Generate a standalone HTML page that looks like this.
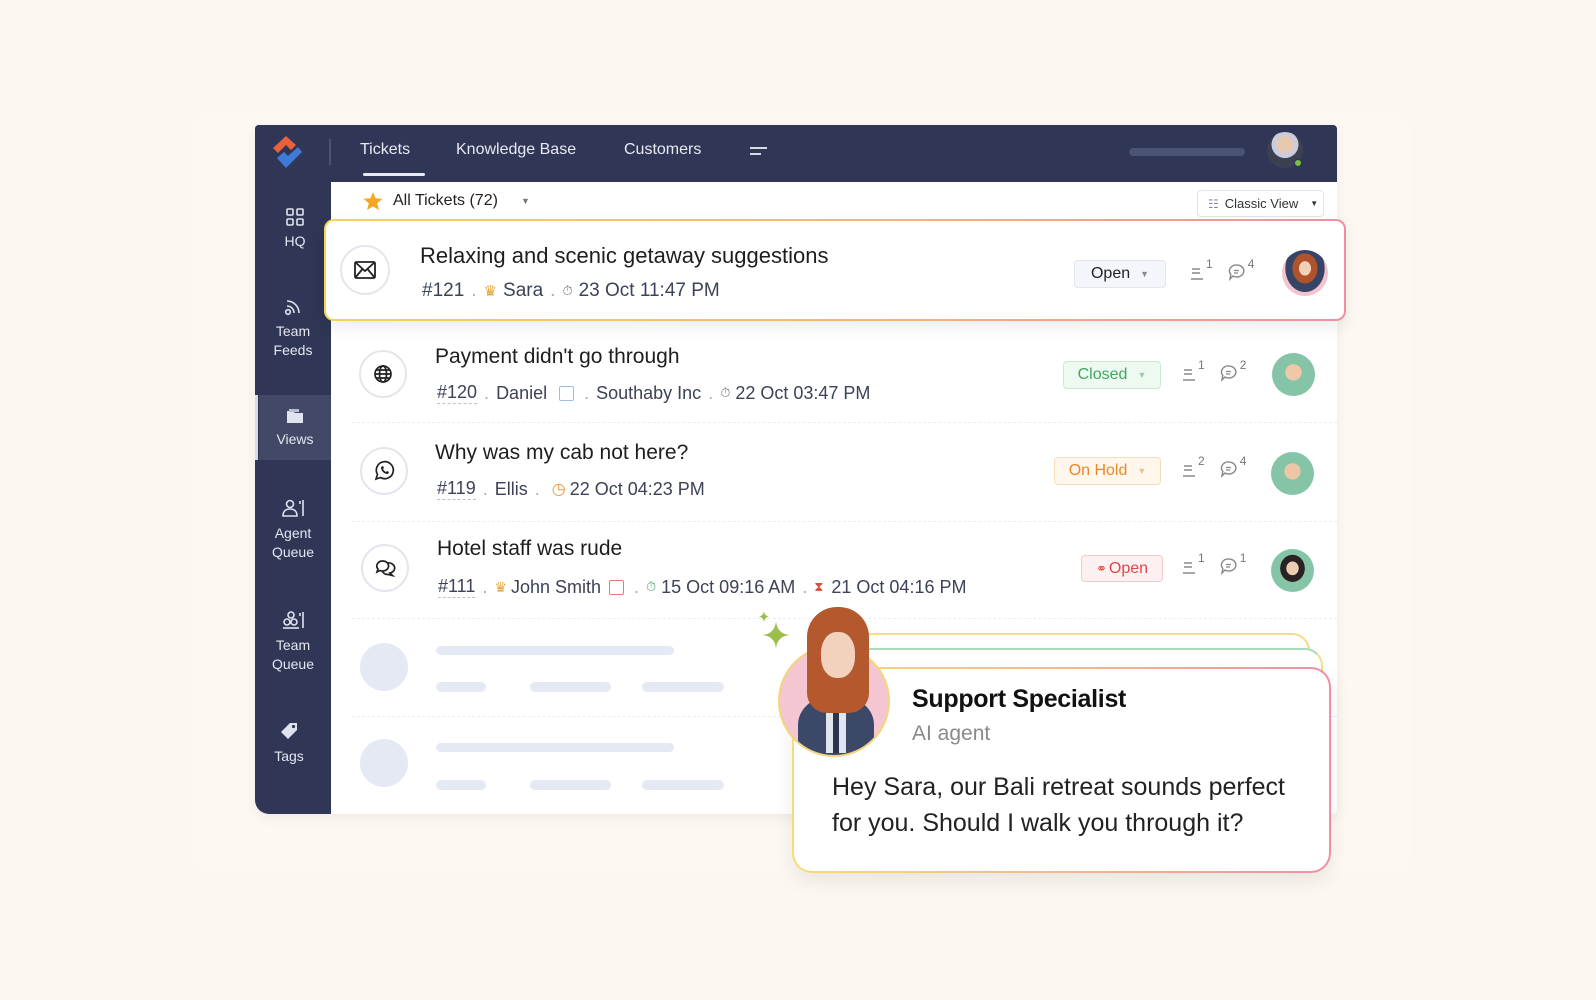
<!DOCTYPE html>
<html><head><meta charset="utf-8">
<style>
*{box-sizing:border-box;margin:0;padding:0}
body{width:1596px;height:1000px;background:#fcf8f1;font-family:"Liberation Sans",sans-serif;position:relative;overflow:hidden;color:#222}
.abs{position:absolute}
.panel{left:190px;top:112px;width:1222px;height:762px;background:#fdf9f2;border-radius:20px}
.frame{left:255px;top:125px;width:1082px;height:689px;background:#fff;border-radius:4px 4px 4px 14px;overflow:hidden;box-shadow:0 4px 14px rgba(0,0,0,.06)}
.nav{left:0;top:0;width:1082px;height:57px;background:#2f3656}
.side{left:0;top:0;width:76px;height:689px;background:#2f3656}
.tab{color:#e8eaf2;font-size:16px;top:16px}
.sitem{position:absolute;left:0;width:76px;text-align:center;color:#e4e7f0;font-size:14px;line-height:19px}
.sitem svg{display:block;margin:0 auto 6px}
.row .t{position:absolute;font-size:21px;color:#1e1e1e}
.meta{position:absolute;font-size:18px;color:#3c4257;display:flex;align-items:center;white-space:nowrap}
.meta .d{color:#aab;margin:0 7px}
.ic{position:absolute;width:48px;height:48px;border-radius:50%;border:2px solid #e4e6ee;background:#fff;display:flex;align-items:center;justify-content:center}
.st{position:absolute;height:28px;border-radius:4px;font-size:16px;display:flex;align-items:center;justify-content:center;gap:10px}
.st i{font-style:normal;font-size:9px;opacity:.5}
.cnt{position:absolute;font-size:13px;color:#777;display:flex;align-items:flex-start;gap:14px}
.cnt span{display:flex;align-items:flex-start}
.cnt sup{font-size:12px;line-height:1;margin-left:1px;margin-top:-4px}
.av{position:absolute;border-radius:50%;overflow:hidden}
.sep{position:absolute;left:352px;width:985px;border-top:1px dashed #eceef3}
.sk{position:absolute;background:#e4e9f3;border-radius:6px}
.hid{border-bottom:1px dashed #b9bfd6}
</style></head><body>
<svg width="0" height="0" style="position:absolute">
<defs>
<symbol id="ls" viewBox="0 0 16 20"><path d="M3 7h8M3 11h8M2 17h12" stroke="#888" stroke-width="1.4" fill="none"/></symbol>
<symbol id="cm" viewBox="0 0 20 20"><path d="M10 3a7 6 0 1 1-4 11l-3 3 .8-4.5A7 6 0 0 1 10 3z" stroke="#888" stroke-width="1.4" fill="none"/><path d="M7 8.5h5M7 11h4" stroke="#888" stroke-width="1.3"/></symbol>
</defs></svg>
<div class="abs panel"></div>
<div class="abs frame">
  <div class="abs nav"></div>
  <div class="abs side"></div>
  <svg class="abs" style="left:12px;top:6px" width="40" height="42" viewBox="0 0 40 42">
    <path d="M6 17 L19 5 L29 14 L24 19 L19 14 L11 22 Z" fill="#e8603c"/>
    <path d="M10 27 L17 21 L21 25 L31 16 L35 21 L19 37 Z" fill="#3f7bd6"/>
  </svg>
  <div class="abs" style="left:74px;top:14px;width:2px;height:26px;background:#4a5172"></div>
  <div class="abs tab" style="left:105px">Tickets</div>
  <div class="abs" style="left:108px;top:48px;width:62px;height:3px;background:#e8eaf2;border-radius:2px"></div>
  <div class="abs tab" style="left:201px">Knowledge Base</div>
  <div class="abs tab" style="left:369px">Customers</div>
  <div class="abs" style="left:495px;top:22px;width:17px;height:2px;background:#d8dbe6"></div>
  <div class="abs" style="left:495px;top:28px;width:11px;height:2px;background:#d8dbe6"></div>
  <div class="abs" style="left:874px;top:23px;width:116px;height:8px;background:#4c5475;border-radius:4px"></div>
  <div class="av" style="left:1012px;top:7px;width:36px;height:36px;background:radial-gradient(circle at 50% 35%,#e8c9b0 0 28%,#ccd 29% 45%,#3c4152 46%)"></div>
  <div class="abs" style="left:1039px;top:34px;width:8px;height:8px;border-radius:50%;background:#7ac143;border:1px solid #2f3656"></div>

  <div class="sitem" style="top:83px;left:2px"><svg width="18" height="18" viewBox="0 0 18 18" fill="none" stroke="#dfe3ee" stroke-width="1.6"><rect x="1" y="1" width="6" height="6" rx="1"/><rect x="11" y="1" width="6" height="6" rx="1"/><rect x="1" y="11" width="6" height="6" rx="1"/><rect x="11" y="11" width="6" height="6" rx="1"/></svg>HQ</div>
  <div class="sitem" style="top:173px;left:0"><svg width="20" height="18" viewBox="0 0 20 18" fill="none" stroke="#dfe3ee" stroke-width="1.6"><circle cx="5" cy="14" r="2.3"/><path d="M4 8 A7 7 0 0 1 11 15"/><path d="M4 3 A12 12 0 0 1 16 15"/></svg>Team<br>Feeds</div>
  <div class="abs" style="left:4px;top:270px;width:72px;height:65px;background:#414966"></div>
  <div class="abs" style="left:0;top:270px;width:3px;height:65px;background:#d9dce6"></div>
  <div class="sitem" style="top:283px;left:2px"><svg width="20" height="16" viewBox="0 0 20 16"><path d="M2 3 h6 l2 2 h8 v10 h-16z" fill="#dfe3ee"/><path d="M4 1 h10 v3 h-10z" fill="#b9bfd2"/></svg>Views</div>
  <div class="sitem" style="top:373px;left:0"><svg width="24" height="20" viewBox="0 0 24 20" fill="none" stroke="#dfe3ee" stroke-width="1.6"><circle cx="9" cy="6" r="3.5"/><path d="M2 18 c0-5 3-7 7-7 s7 2 7 7z"/><path d="M19 3 v3 M22 2 v16"/></svg>Agent<br>Queue</div>
  <div class="sitem" style="top:485px;left:0"><svg width="24" height="20" viewBox="0 0 24 20" fill="none" stroke="#dfe3ee" stroke-width="1.6"><circle cx="10" cy="5" r="3"/><circle cx="6" cy="12" r="3"/><circle cx="13" cy="12" r="3"/><path d="M2 18 h16"/><path d="M19 3 v3 M22 2 v16"/></svg>Team<br>Queue</div>
  <div class="sitem" style="top:596px;left:-4px"><svg width="20" height="20" viewBox="0 0 20 20"><path d="M11 2 h7 v7 l-9 9 -7-7z" fill="#dfe3ee"/><circle cx="14.5" cy="5.5" r="1.6" fill="#2f3656"/></svg>Tags</div>

  <svg class="abs" style="left:108px;top:67px" width="20" height="19" viewBox="0 0 20 19"><path d="M10 0 L12.6 6.2 L19.5 6.8 L14.2 11.3 L15.9 18 L10 14.4 L4.1 18 L5.8 11.3 L0.5 6.8 L7.4 6.2Z" fill="#f5a623"/></svg>
  <div class="abs" style="left:138px;top:67px;font-size:16px;color:#222">All Tickets (72)</div>
  <div class="abs" style="left:266px;top:71px;font-size:9px;color:#777">▼</div>
  <div class="abs" style="left:942px;top:65px;width:127px;height:27px;border:1px solid #e2e4ea;border-radius:4px;font-size:13px;color:#333;display:flex;align-items:center;padding-left:10px;gap:6px"><span style="color:#889;font-size:12px">☷</span>Classic View<span style="font-size:8px;margin-left:6px">▼</span></div>

  <div class="sep" style="top:297px;left:97px"></div>
  <div class="sep" style="top:396px;left:97px"></div>
  <div class="sep" style="top:493px;left:97px"></div>
  <div class="sep" style="top:591px;left:97px"></div>

  <!-- Row 2 -->
  <div class="ic" style="left:104px;top:225px"><svg width="20" height="20" viewBox="0 0 20 20" fill="none" stroke="#222" stroke-width="1.7"><circle cx="10" cy="10" r="8"/><ellipse cx="10" cy="10" rx="3.5" ry="8"/><path d="M2 10h16M3.5 6h13M3.5 14h13"/></svg></div>
  <div class="row"><div class="t" style="left:180px;top:220px">Payment didn't go through</div></div>
  <div class="meta" style="left:182px;top:257px"><span class="hid">#120</span><span class="d">.</span>Daniel<span style="margin:0 10px 0 12px;width:15px;height:15px;border:1.5px solid #9bbce6;border-radius:2px;display:inline-block"></span><span class="d" style="margin-left:0">.</span>Southaby Inc<span class="d">.</span><span style="color:#777;font-size:13px;margin-right:5px">⏱</span>22 Oct 03:47 PM</div>
  <div class="st" style="left:808px;top:236px;width:98px;background:#eef9f1;border:1px solid #c9ebd3;color:#3fa860">Closed<i>▼</i></div>
  <div class="cnt" style="left:926px;top:238px"><span><svg width="16" height="20"><use href="#ls"/></svg><sup>1</sup></span><span><svg width="20" height="20"><use href="#cm"/></svg><sup>2</sup></span></div>
  <div class="av" style="left:1017px;top:228px;width:43px;height:43px;background:radial-gradient(circle at 50% 45%,#f0c8a8 0 25%,#86c4a8 26%)"></div>

  <!-- Row 3 -->
  <div class="ic" style="left:105px;top:322px"><svg width="22" height="22" viewBox="0 0 22 22" fill="none" stroke="#222" stroke-width="1.7"><path d="M3 19 L4.5 14.5 A8.5 8.5 0 1 1 7.5 17.5Z"/><path d="M8 7 c0 4 3 7 7 7 l1-2 -2-1 -1 1 c-1-.5-2.5-2-3-3 l1-1 -1-2z" fill="#222" stroke="none"/></svg></div>
  <div class="row"><div class="t" style="left:180px;top:316px">Why was my cab not here?</div></div>
  <div class="meta" style="left:182px;top:353px"><span class="hid">#119</span><span class="d">.</span>Ellis<span class="d" style="margin-right:12px">.</span><span style="color:#e8923c;font-size:16px;margin-right:4px">◷</span>22 Oct 04:23 PM</div>
  <div class="st" style="left:799px;top:332px;width:107px;background:#fff6ec;border:1px solid #f6dcc0;color:#e8892a">On Hold<i>▼</i></div>
  <div class="cnt" style="left:926px;top:334px"><span><svg width="16" height="20"><use href="#ls"/></svg><sup>2</sup></span><span><svg width="20" height="20"><use href="#cm"/></svg><sup>4</sup></span></div>
  <div class="av" style="left:1016px;top:327px;width:43px;height:43px;background:radial-gradient(circle at 50% 45%,#eec6a6 0 25%,#86c4a8 26%)"></div>

  <!-- Row 4 -->
  <div class="ic" style="left:106px;top:419px"><svg width="22" height="20" viewBox="0 0 22 20" fill="none" stroke="#222" stroke-width="1.7"><path d="M9 3 a6 5 0 1 1 -3 9.5 l-3 1.5 1-3 a6 5 0 0 1 5-8z"/><path d="M13 5 a6 5 0 1 1 3 10 l2.5 2.5 -4-1 a6 5 0 0 1 -6-3"/></svg></div>
  <div class="row"><div class="t" style="left:182px;top:412px">Hotel staff was rude</div></div>
  <div class="meta" style="left:183px;top:451px"><span class="hid">#111</span><span class="d">.</span><span style="color:#e0a63a;font-size:14px;margin-right:4px">♛</span>John Smith<span style="margin:0 8px;width:15px;height:15px;border:1.5px solid #e87b6a;border-radius:2px;display:inline-block"></span><span class="d" style="margin-left:2px">.</span><span style="color:#4caf6a;font-size:13px;margin-right:5px">⏱</span>15 Oct 09:16 AM<span class="d">.</span><span style="color:#e04a3a;font-size:13px;margin-right:8px">⧗</span>21 Oct 04:16 PM</div>
  <div class="st" style="left:826px;top:430px;width:82px;height:27px;background:#fdf0f0;border:1px solid #f4caca;color:#e0474a;gap:2px"><span style="font-size:13px">⚭</span>Open</div>
  <div class="cnt" style="left:926px;top:431px"><span><svg width="16" height="20"><use href="#ls"/></svg><sup>1</sup></span><span><svg width="20" height="20"><use href="#cm"/></svg><sup>1</sup></span></div>
  <div class="av" style="left:1016px;top:424px;width:43px;height:43px;background:radial-gradient(ellipse at 50% 45%,#f0cbb0 0 20%,#2a2222 21% 40%,#86c4a8 41%)"></div>

  <div class="sk" style="left:105px;top:518px;width:48px;height:48px;border-radius:50%"></div>
  <div class="sk" style="left:181px;top:521px;width:238px;height:9px"></div>
  <div class="sk" style="left:181px;top:557px;width:50px;height:10px"></div>
  <div class="sk" style="left:275px;top:557px;width:81px;height:10px"></div>
  <div class="sk" style="left:387px;top:557px;width:82px;height:10px"></div>
  <div class="sk" style="left:105px;top:614px;width:48px;height:48px;border-radius:50%"></div>
  <div class="sk" style="left:181px;top:618px;width:238px;height:9px"></div>
  <div class="sk" style="left:181px;top:655px;width:50px;height:10px"></div>
  <div class="sk" style="left:275px;top:655px;width:81px;height:10px"></div>
  <div class="sk" style="left:387px;top:655px;width:82px;height:10px"></div>
</div>

<div class="abs" style="left:324px;top:219px;width:1022px;height:102px;border-radius:10px;padding:2px;background:linear-gradient(90deg,#f7d35a,#f4b07a 60%,#ee8fa0);box-shadow:0 6px 16px rgba(0,0,0,.08)">
  <div style="width:100%;height:100%;background:#fff;border-radius:8px;position:relative">
    <div class="ic" style="left:14px;top:24px;width:50px;height:50px"><svg width="22" height="18" viewBox="0 0 22 18" fill="none" stroke="#222" stroke-width="1.8"><rect x="1" y="1" width="20" height="16" rx="1.5"/><path d="M1 1 L11 10 L21 1 M1 17 L8.5 8 M21 17 L13.5 8"/></svg></div>
    <div style="position:absolute;left:94px;top:22px;font-size:22px;color:#1e1e1e">Relaxing and scenic getaway suggestions</div>
    <div class="meta" style="left:96px;top:59px;font-size:19px"><span>#121</span><span class="d">.</span><span style="color:#e0a63a;font-size:15px;margin-right:6px">♛</span>Sara<span class="d">.</span><span style="color:#777;font-size:13px;margin-right:6px">⏱</span>23 Oct 11:47 PM</div>
    <div class="st" style="left:748px;top:39px;width:92px;height:28px;background:#f4f6fb;border:1px solid #e2e6f0;color:#222">Open<i>▼</i></div>
    <div class="cnt" style="left:863px;top:41px"><span><svg width="16" height="20"><use href="#ls"/></svg><sup>1</sup></span><span><svg width="20" height="20"><use href="#cm"/></svg><sup>4</sup></span></div>
    <div class="av" style="left:956px;top:29px;width:46px;height:46px;background:radial-gradient(ellipse at 50% 40%,#f3d0b8 0 18%,#b0522a 19% 38%,#364466 39% 60%,#f2c4cf 61%)"></div>
  </div>
</div>

<div class="abs" style="left:855px;top:633px;width:455px;height:60px;border-radius:18px;border:2px solid #f4dc8a;background:#fff;box-shadow:0 2px 8px rgba(0,0,0,.05)"></div>
<div class="abs" style="left:845px;top:648px;width:478px;height:60px;border-radius:18px;border:2px solid #f2e08a;border-top-color:#a8dcb8;background:#fff;box-shadow:0 2px 8px rgba(0,0,0,.05)"></div>
<div class="abs" style="left:792px;top:667px;width:539px;height:206px;border-radius:20px;padding:2px;background:linear-gradient(90deg,#f6dc78,#f3b88a 50%,#ee8fa6);box-shadow:0 8px 20px rgba(0,0,0,.08)">
  <div style="width:100%;height:100%;background:#fff;border-radius:18px;position:relative">
    <div style="position:absolute;left:118px;top:16px;font-size:25px;font-weight:bold;color:#111;letter-spacing:-0.3px">Support Specialist</div>
    <div style="position:absolute;left:118px;top:53px;font-size:21px;color:#8a8a8a">AI agent</div>
    <div style="position:absolute;left:38px;top:100px;font-size:25px;line-height:36px;color:#222;white-space:nowrap">Hey Sara, our Bali retreat sounds perfect<br>for you. Should I walk you through it?</div>
  </div>
</div>
<div class="abs" style="left:778px;top:645px;width:112px;height:112px;border-radius:50%;background:#f4c6d2;border:2px solid #f4d57e;overflow:hidden">
  <div class="abs" style="left:18px;top:50px;width:76px;height:70px;border-radius:40% 40% 0 0;background:#3b4868"></div>
  <div class="abs" style="left:46px;top:56px;width:20px;height:50px;background:#dfe6ee"></div>
  <div class="abs" style="left:53px;top:62px;width:6px;height:44px;background:#2b3550"></div>
</div>
<div class="abs" style="left:807px;top:607px;width:62px;height:106px;border-radius:30px 30px 20px 20px;background:#b4582e"></div>
<div class="abs" style="left:821px;top:632px;width:34px;height:46px;border-radius:45%;background:#f2d2bc"></div>
<svg class="abs" style="left:758px;top:609px" width="40" height="50" viewBox="0 0 40 50"><path d="M7 0 Q8 7 14 8 Q8 9 7 16 Q6 9 0 8 Q6 7 7 0Z" fill="#9bbf4a" transform="translate(1,2) scale(.7)"/><path d="M18 12 Q19 25 32 26 Q19 27 18 40 Q17 27 4 26 Q17 25 18 12Z" fill="#9bbf4a"/></svg>
</body></html>
